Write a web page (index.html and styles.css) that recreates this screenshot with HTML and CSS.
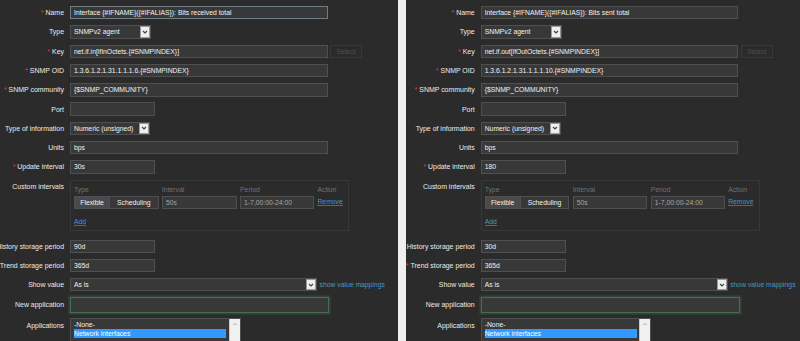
FILE: index.html
```html
<!DOCTYPE html>
<html>
<head>
<meta charset="utf-8">
<link rel="stylesheet" href="styles.css">
</head>
<body>
<div class="screen">
  <div class="panel">
    <div class="row"><div class="label req">Name</div><div class="field"><div class="input long focus">Interface {#IFNAME}({#IFALIAS}): Bits received total</div></div></div>
    <div class="row"><div class="label">Type</div><div class="field"><div class="select w-type"><span class="val">SNMPv2 agent</span><span class="arrow"><svg viewBox="0 0 8 8"><path d="M2 3 L4 5 L6 3" fill="none" stroke="#444" stroke-width="1.2"/></svg></span></div></div></div>
    <div class="row"><div class="label req">Key</div><div class="field"><div class="input long">net.if.in[ifInOctets.{#SNMPINDEX}]</div><span class="btn-select">Select</span></div></div>
    <div class="row"><div class="label req">SNMP OID</div><div class="field"><div class="input long">1.3.6.1.2.1.31.1.1.1.6.{#SNMPINDEX}</div></div></div>
    <div class="row"><div class="label req">SNMP community</div><div class="field"><div class="input long">{$SNMP_COMMUNITY}</div></div></div>
    <div class="row"><div class="label">Port</div><div class="field"><div class="input short"></div></div></div>
    <div class="row"><div class="label">Type of information</div><div class="field"><div class="select w-info"><span class="val">Numeric (unsigned)</span><span class="arrow"><svg viewBox="0 0 8 8"><path d="M2 3 L4 5 L6 3" fill="none" stroke="#444" stroke-width="1.2"/></svg></span></div></div></div>
    <div class="row"><div class="label">Units</div><div class="field"><div class="input long">bps</div></div></div>
    <div class="row"><div class="label req">Update interval</div><div class="field"><div class="input short">30s</div></div></div>
    <div class="row row-box"><div class="label">Custom intervals</div>
      <div class="intervals">
        <div class="ih">Type</div><div class="ih">Interval</div><div class="ih">Period</div><div class="ih">Action</div>
        <div class="seg"><span class="seg-on">Flexible</span><span class="seg-off">Scheduling</span></div>
        <div class="input dim">50s</div>
        <div class="input dim">1-7,00:00-24:00</div>
        <a class="link ul">Remove</a>
        <a class="link ul add">Add</a>
      </div>
    </div>
    <div class="row"><div class="label">History storage period</div><div class="field"><div class="input short">90d</div></div></div>
    <div class="row"><div class="label req">Trend storage period</div><div class="field"><div class="input short">365d</div></div></div>
    <div class="row"><div class="label">Show value</div><div class="field"><div class="select w-show"><span class="val">As is</span><span class="arrow"><svg viewBox="0 0 8 8"><path d="M2 3 L4 5 L6 3" fill="none" stroke="#444" stroke-width="1.2"/></svg></span></div><a class="link">show value mappings</a></div></div>
    <div class="row row-app"><div class="label">New application</div><div class="field"><div class="input newapp"></div></div></div>
    <div class="row"><div class="label">Applications</div><div class="field"><div class="listbox"><div class="opts"><div class="opt">-None-</div><div class="opt sel">Network interfaces</div></div><div class="sbar"><svg viewBox="0 0 8 8"><path d="M2.5 5 L4 3.5 L5.5 5" fill="none" stroke="#a3a3a3" stroke-width="1"/></svg></div></div></div></div>
  </div>
  <div class="divider"></div>
  <div class="panel right">
    <div class="row"><div class="label req">Name</div><div class="field"><div class="input long">Interface {#IFNAME}({#IFALIAS}): Bits sent total</div></div></div>
    <div class="row"><div class="label">Type</div><div class="field"><div class="select w-type"><span class="val">SNMPv2 agent</span><span class="arrow"><svg viewBox="0 0 8 8"><path d="M2 3 L4 5 L6 3" fill="none" stroke="#444" stroke-width="1.2"/></svg></span></div></div></div>
    <div class="row"><div class="label req">Key</div><div class="field"><div class="input long">net.if.out[ifOutOctets.{#SNMPINDEX}]</div><span class="btn-select">Select</span></div></div>
    <div class="row"><div class="label req">SNMP OID</div><div class="field"><div class="input long">1.3.6.1.2.1.31.1.1.1.10.{#SNMPINDEX}</div></div></div>
    <div class="row"><div class="label req">SNMP community</div><div class="field"><div class="input long">{$SNMP_COMMUNITY}</div></div></div>
    <div class="row"><div class="label">Port</div><div class="field"><div class="input short"></div></div></div>
    <div class="row"><div class="label">Type of information</div><div class="field"><div class="select w-info"><span class="val">Numeric (unsigned)</span><span class="arrow"><svg viewBox="0 0 8 8"><path d="M2 3 L4 5 L6 3" fill="none" stroke="#444" stroke-width="1.2"/></svg></span></div></div></div>
    <div class="row"><div class="label">Units</div><div class="field"><div class="input long">bps</div></div></div>
    <div class="row"><div class="label req">Update interval</div><div class="field"><div class="input short">180</div></div></div>
    <div class="row row-box"><div class="label">Custom intervals</div>
      <div class="intervals">
        <div class="ih">Type</div><div class="ih">Interval</div><div class="ih">Period</div><div class="ih">Action</div>
        <div class="seg"><span class="seg-on">Flexible</span><span class="seg-off">Scheduling</span></div>
        <div class="input dim">50s</div>
        <div class="input dim">1-7,00:00-24:00</div>
        <a class="link ul">Remove</a>
        <a class="link ul add">Add</a>
      </div>
    </div>
    <div class="row"><div class="label">History storage period</div><div class="field"><div class="input short">30d</div></div></div>
    <div class="row"><div class="label req">Trend storage period</div><div class="field"><div class="input short">365d</div></div></div>
    <div class="row"><div class="label">Show value</div><div class="field"><div class="select w-show"><span class="val">As is</span><span class="arrow"><svg viewBox="0 0 8 8"><path d="M2 3 L4 5 L6 3" fill="none" stroke="#444" stroke-width="1.2"/></svg></span></div><a class="link">show value mappings</a></div></div>
    <div class="row row-app"><div class="label">New application</div><div class="field"><div class="input newapp"></div></div></div>
    <div class="row"><div class="label">Applications</div><div class="field"><div class="listbox"><div class="opts"><div class="opt">-None-</div><div class="opt sel">Network interfaces</div></div><div class="sbar"><svg viewBox="0 0 8 8"><path d="M2.5 5 L4 3.5 L5.5 5" fill="none" stroke="#a3a3a3" stroke-width="1"/></svg></div></div></div></div>
  </div>
</div>
</body>
</html>
```
FILE: styles.css
```css
html, body {
  margin: 0;
  padding: 0;
  height: 341px;
  overflow: hidden;
  background: #2b2b2b;
}
body {
  font-family: "Liberation Sans", Arial, sans-serif;
  font-size: 6.8px;
  color: #f2f2f2;
}
.screen {
  display: flex;
  height: 341px;
}
.panel {
  width: 398px;
  flex: none;
  box-sizing: border-box;
  overflow: hidden;
  display: flex;
  flex-direction: column;
  gap: 5.9px;
  padding-top: 6px;
  background: #2b2b2b;
}
.panel.right {
  flex: 1;
  width: auto;
  padding-left: 5px;
}
.divider {
  width: 7.7px;
  flex: none;
  background: #efefef;
}
.row {
  display: grid;
  grid-template-columns: 64px 1fr;
  column-gap: 6px;
  align-items: start;
}
.label {
  display: flex;
  justify-content: flex-end;
  align-items: center;
  height: 13.4px;
  white-space: nowrap;
  color: #ececec;
  font-size: 6.95px;
}
.req::before {
  content: "*";
  color: #e33734;
  margin-right: 2px;
}
.field {
  display: flex;
  align-items: center;
  gap: 2.5px;
}
.input {
  box-sizing: border-box;
  height: 13.4px;
  background: #383838;
  border: 1px solid #4f4f4f;
  padding: 0 3px;
  color: #f2f2f2;
  display: flex;
  align-items: center;
  white-space: nowrap;
  overflow: hidden;
}
.long { width: 257.5px; }
.short { width: 85px; }
.focus { border-color: #717d84; }
.btn-select {
  box-sizing: border-box;
  width: 32px;
  height: 13.4px;
  border: 1px solid #383838;
  color: #4f4f4f;
  display: flex;
  align-items: center;
  justify-content: center;
}
.select {
  box-sizing: border-box;
  height: 13.4px;
  background: #383838;
  border: 1px solid #4f4f4f;
  display: flex;
  align-items: stretch;
}
.select .val {
  flex: 1;
  display: flex;
  align-items: center;
  padding-left: 3px;
  white-space: nowrap;
  overflow: hidden;
}
.select .arrow {
  width: 10px;
  box-sizing: border-box;
  background: #eeeeee;
  border: 1px solid #9a9a9a;
  display: flex;
  align-items: center;
  justify-content: center;
}
.select .arrow svg {
  width: 8px;
  height: 8px;
}
.w-type { width: 81px; }
.w-info { width: 80px; }
.w-show { width: 247px; }
.link {
  color: #4796c4;
  white-space: nowrap;
  cursor: pointer;
}
.ul {
  border-bottom: 1px solid #3a6f8f;
  line-height: 7px;
}
.row-box { margin-bottom: 3.1px; }
.intervals {
  box-sizing: border-box;
  width: 279px;
  height: 51px;
  border: 1px solid #383838;
  padding: 4.5px 3px 0 3px;
  display: grid;
  grid-template-columns: 84.6px 74.7px 74px auto;
  column-gap: 3.4px;
  grid-template-rows: 8px 13.4px;
  row-gap: 2.5px;
  align-items: center;
  justify-items: start;
}
.ih {
  color: #727272;
}
.seg {
  display: flex;
  height: 13.4px;
  width: 84.6px;
}
.seg span {
  box-sizing: border-box;
  display: flex;
  align-items: center;
  justify-content: center;
  border: 1px solid #4f4f4f;
  color: #f2f2f2;
}
.seg-on {
  width: 36px;
  background: #4a4a4a;
}
.seg-off {
  width: 48.6px;
  background: #383838;
  border-left: none !important;
}
.intervals .dim {
  color: #a6a6a6;
  width: 100%;
}
.add {
  grid-column: 1;
  margin-top: 3.5px;
}
.newapp {
  width: 259px;
  height: 15.2px;
  border-color: #4a6a51;
  box-shadow: 0 0 0 1.6px #2f4433;
}
.row-app .label {
  height: 15.2px;
}
.listbox {
  box-sizing: border-box;
  width: 170.7px;
  height: 40px;
  background: #383838;
  border: 1px solid #4f4f4f;
  display: flex;
}
.opts {
  flex: 1;
  padding: 1px 2.4px 0 3px;
}
.opt {
  height: 9px;
  line-height: 9px;
  white-space: nowrap;
  color: #f2f2f2;
}
.opt.sel {
  background: #3399ff;
  color: #ffffff;
}
.sbar {
  width: 10px;
  background: #f0f0f0;
  border-left: 1px solid #c9c9c9;
  display: flex;
  justify-content: center;
  align-items: flex-start;
}
.sbar svg {
  width: 8px;
  height: 8px;
  margin-top: 1px;
}
```
